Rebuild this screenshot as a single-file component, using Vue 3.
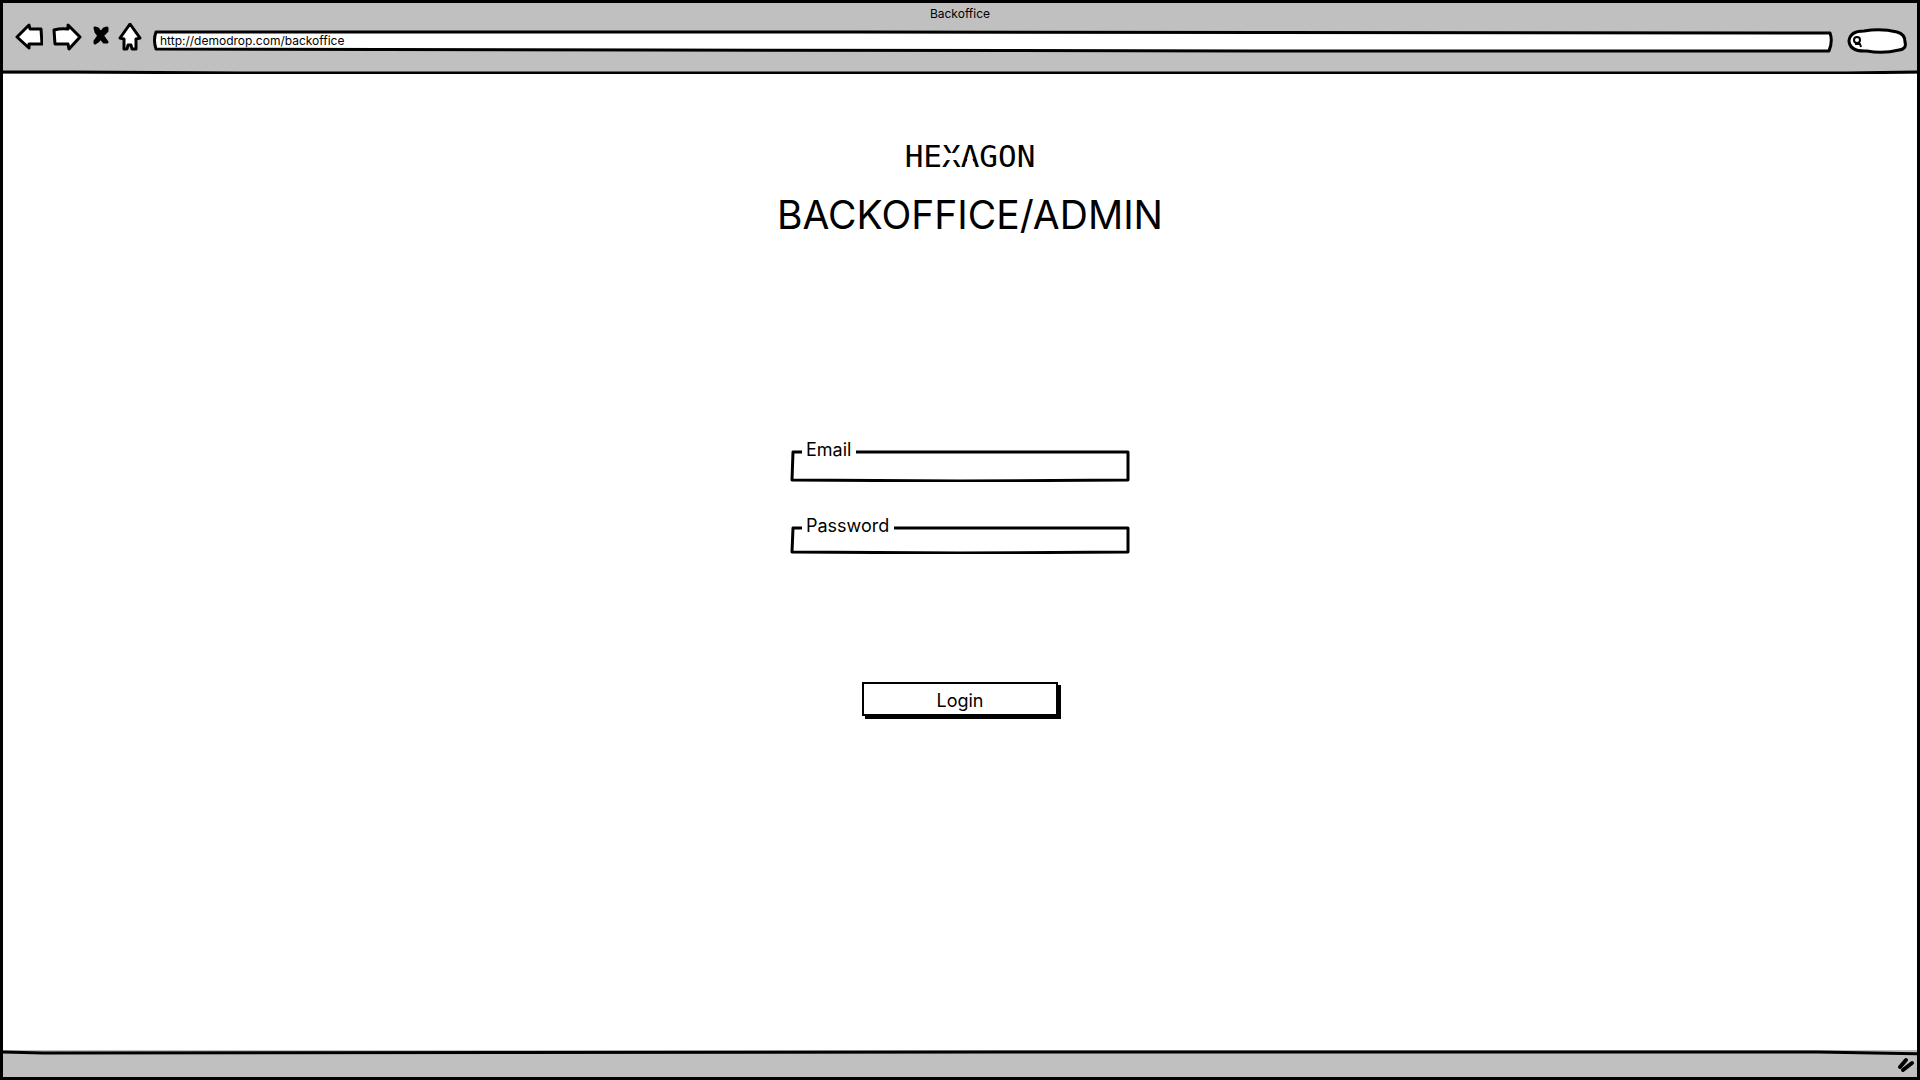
<script setup>
import { ref } from 'vue'

const address = ref('http://demodrop.com/backoffice')
const search = ref('')
const email = ref('')
const password = ref('')
</script>

<template>
  <div class="window">
    <header class="chrome">
      <svg class="sketch" viewBox="0 0 1920 71" preserveAspectRatio="none" aria-hidden="true">
        <path d="M0 69 L70 69 L240 70 L900 70 L1400 70 L1850 70 L1920 69" />
      </svg>
      <div class="chrome-inner">
        <div class="title">Backoffice</div>
        <div class="toolbar">
          <nav class="nav">
            <button type="button" aria-label="Back">
              <svg width="28" height="28" viewBox="0 0 28 28"><path d="M2 14 L14 2 L15 6 L26 6 L27 21 L14 21 L14 25 Z" /></svg>
            </button>
            <button type="button" aria-label="Forward">
              <svg width="30" height="28" viewBox="0 0 30 28"><path d="M2 7 Q9 5 16 6 L16 2 L28 14 L17 26 L16 21 L3 21 Z" /></svg>
            </button>
            <button type="button" aria-label="Stop">
              <svg width="18" height="28" viewBox="0 0 18 28"><path class="cross" d="M4 5 L7 6 L11 12 L16 19 L13 19 L9 14 L5 9 Z M16 5 L13 6 L9 11 L4 18 L4 20 L7 18 L12 12 L16 8 Z" /></svg>
            </button>
            <button type="button" aria-label="Home">
              <svg width="24" height="28" viewBox="0 0 24 28"><path d="M12 1 L22 15 L18 16 L18 26 L14 26 L13 22 L10 22 L9 26 L6 26 L6 16 L2 15 Z" /></svg>
            </button>
          </nav>
          <div class="address">
            <svg class="sketch" viewBox="0 0 1680 24" preserveAspectRatio="none" aria-hidden="true">
              <path d="M3 3 L700 3 L1677 4 Q1680 12 1676 22 L1100 22 L500 21 L3 20 Q0 11 3 3 Z" />
            </svg>
            <input v-model="address" type="text" aria-label="Address" />
          </div>
          <div class="search">
            <svg class="sketch" viewBox="0 0 60 26" aria-hidden="true">
              <path d="M2 13 Q3 3 17 3 Q34 0 50 4 Q58 6 58 14 Q60 21 52 22 Q36 26 20 23 Q3 24 2 13 Z" />
              <circle cx="10" cy="12" r="3" /><path d="M8 16 L13 16 L14 19" />
            </svg>
            <input v-model="search" type="text" aria-label="Search" />
          </div>
        </div>
      </div>
    </header>

    <main class="page">
      <div class="brand">
        <div class="logo">HE<span class="logo-x">X</span><span class="logo-a">A</span>GON</div>
        <h1>BACKOFFICE/ADMIN</h1>
      </div>
      <form class="login" @submit.prevent>
        <div class="field">
          <label for="email">Email</label>
          <div class="box">
            <svg class="sketch" viewBox="0 0 340 32" preserveAspectRatio="none" aria-hidden="true">
              <path d="M3 2 L170 2 L338 2 L338 30 L170 31 L2 30 Z" />
            </svg>
            <input id="email" v-model="email" type="email" />
          </div>
        </div>
        <div class="field short">
          <label for="password">Password</label>
          <div class="box">
            <svg class="sketch" viewBox="0 0 340 28" preserveAspectRatio="none" aria-hidden="true">
              <path d="M3 2 L170 2 L338 2 L338 26 L170 27 L2 26 Z" />
            </svg>
            <input id="password" v-model="password" type="password" />
          </div>
        </div>
        <button class="submit" type="submit">Login</button>
      </form>
    </main>

    <footer class="status">
      <svg class="sketch" viewBox="0 0 1920 28" preserveAspectRatio="none" aria-hidden="true">
        <path d="M0 2 L40 3 L1000 2 L1820 2 L1920 4" />
      </svg>
      <svg class="grip" width="20" height="20" viewBox="0 0 20 20" aria-hidden="true">
        <path d="M3 13 L9 6 M6 16 L15 9" />
      </svg>
    </footer>
  </div>
</template>

<style>
body {
  background: #fff;
}
</style>

<style scoped>
.window {
  display: flex;
  flex-direction: column;
  min-height: 100vh;
  box-sizing: border-box;
  border: 3px solid #000;
  background: #fff;
  color: #000;
  font-family: Inter, "Liberation Sans", sans-serif;
  font-size: 18px;
  font-weight: 400;
}
.chrome,
.address,
.search,
.box,
.status {
  display: grid;
}
.chrome > *,
.address > *,
.search > *,
.box > *,
.status > * {
  grid-area: 1 / 1;
}
.sketch {
  display: block;
  width: 100%;
  height: 100%;
  min-width: 0;
}
.sketch path,
.sketch circle {
  fill: none;
  stroke: #000;
  stroke-width: 3px;
  stroke-linejoin: round;
  vector-effect: non-scaling-stroke;
}
.chrome {
  height: 71px;
  background: #c0c0c0;
}
.title {
  height: 20px;
  line-height: 22px;
  font-size: 12px;
  text-align: center;
}
.toolbar {
  display: flex;
  align-items: flex-start;
  padding: 0 10px 0 12px;
}
.nav {
  display: flex;
  gap: 9px;
  margin-right: 11px;
}
.nav button {
  padding: 0;
  border: 0;
  background: none;
  line-height: 0;
}
.nav path {
  fill: #fff;
  stroke: #000;
  stroke-width: 3px;
  stroke-linejoin: round;
}
.nav .cross {
  fill: #000;
}
.address {
  flex: 1;
  height: 24px;
  margin: 6px 14px 0 0;
}
.search {
  width: 60px;
  height: 26px;
  margin-top: 5px;
}
.address path,
.search path:first-child {
  fill: #fff;
}
.search circle,
.search path:last-child {
  stroke-width: 2px;
}
input {
  min-width: 0;
  width: 100%;
  height: 100%;
  box-sizing: border-box;
  border: 0;
  padding: 0 8px;
  background: none;
  color: inherit;
  font: inherit;
  outline: none;
}
.address input {
  padding: 0 7px 2px;
  font-size: 12px;
}
.search input {
  padding-left: 18px;
  font-size: 12px;
}
.page {
  flex: 1;
  display: flex;
  flex-direction: column;
  align-items: center;
  padding-top: 64px;
}
.brand {
  padding-left: 20px;
  text-align: center;
}
.logo {
  font-family: "DejaVu Sans Mono", monospace;
  font-size: 31px;
  line-height: 36px;
}
.logo-x,
.logo-a {
  position: relative;
}
.logo-x::after,
.logo-a::after {
  content: "";
  position: absolute;
  background: #fff;
}
/* the X is four separate strokes, the A has no bar */
.logo-x::after {
  left: 4px;
  right: 4px;
  top: 15px;
  height: 7px;
}
.logo-a::after {
  left: 5px;
  right: 5px;
  top: 12px;
  height: 15px;
  clip-path: polygon(50% 0, 100% 100%, 0 100%);
}
h1 {
  margin: 18px 0 0;
  font-size: 39px;
  font-weight: 400;
  line-height: 46px;
}
.login {
  display: flex;
  flex-direction: column;
  align-items: center;
  margin-top: 200px;
}
.field {
  width: 340px;
  margin-bottom: 32px;
}
.field label {
  position: relative;
  display: block;
  width: max-content;
  margin: 0 0 -12px 12px;
  padding: 0 5px 0 4px;
  background: #fff;
  line-height: 24px;
}
.box {
  height: 32px;
}
.short .box {
  height: 28px;
}
.submit {
  width: 196px;
  height: 34px;
  margin-top: 96px;
  padding: 2px 0 0;
  border: 2px solid #000;
  background: #fff;
  box-shadow: 3px 3px 0 #000;
  color: inherit;
  font: inherit;
}
.status {
  height: 27px;
  background: #c0c0c0;
}
.grip {
  justify-self: end;
  align-self: center;
}
.grip path {
  fill: none;
  stroke: #000;
  stroke-width: 4px;
  stroke-linecap: round;
}
</style>
